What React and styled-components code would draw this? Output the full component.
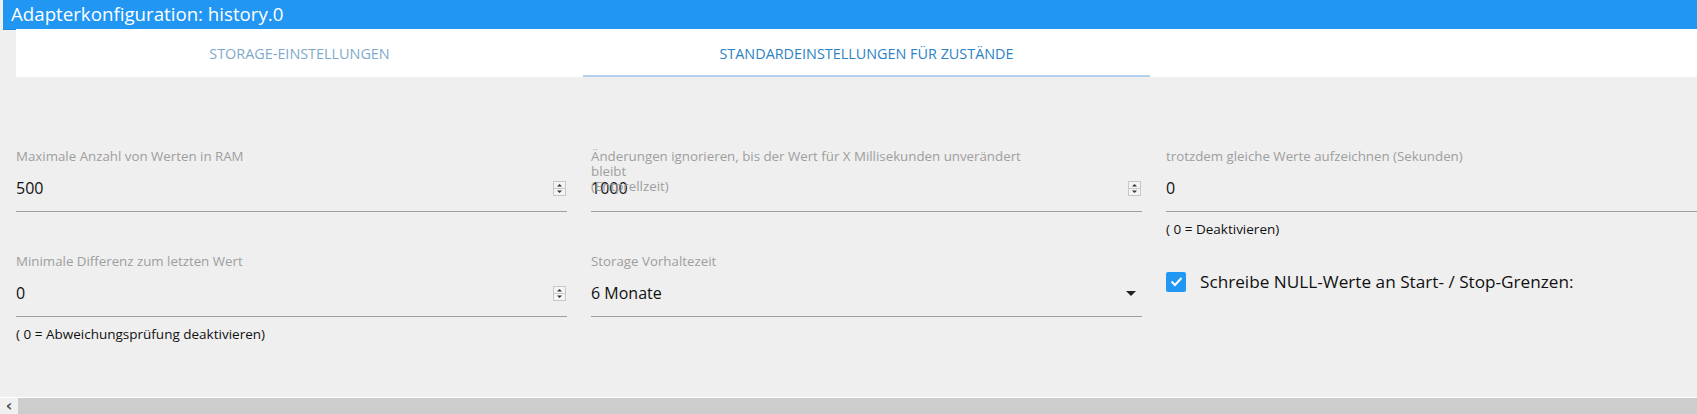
import React from 'react';
import styled, { createGlobalStyle } from 'styled-components';

const GlobalStyle = createGlobalStyle`
  html, body {
    margin: 0;
    padding: 0;
    background: #efefef;
    overflow: hidden;
  }
  body {
    font-family: 'Open Sans', 'Noto Sans', sans-serif;
  }
`;

const SpinnerIcon = () => (
  <svg width="13" height="15" viewBox="0 0 13 15">
    <rect x="0.5" y="0.5" width="12" height="14" fill="#f4f4f4" stroke="#c8c8c8" />
    <line x1="1" y1="7.5" x2="12" y2="7.5" stroke="#c8c8c8" />
    <path d="M4 5.5 L6.5 3 L9 5.5 Z" fill="#333" />
    <path d="M4 9.5 L6.5 12 L9 9.5 Z" fill="#333" />
  </svg>
);

const CaretIcon = () => (
  <svg width="10" height="5" viewBox="0 0 10 5">
    <path d="M0 0 L10 0 L5 5 Z" fill="#222" />
  </svg>
);

const CheckIcon = () => (
  <svg width="13" height="11" viewBox="0 0 13 11">
    <path d="M1.5 5.5 L5 9 L11.5 2" stroke="#fff" strokeWidth="2" fill="none" />
  </svg>
);

const App = () => {
  return (
    <>
      <GlobalStyle />
      <Page>
        <Content>
          <Header>Adapterkonfiguration: history.0</Header>
          <TabBar>
            <Tab>Storage-Einstellungen</Tab>
            <Tab active>Standardeinstellungen für Zustände</Tab>
          </TabBar>

          <FieldGrid>
            <Cell>
              <Field>
                <Label>Maximale Anzahl von Werten in RAM</Label>
                <InputRow>
                  <Value>500</Value>
                  <SpinnerIcon />
                </InputRow>
              </Field>
            </Cell>

            <Cell>
              <Field>
                <Label>
                  Änderungen ignorieren, bis der Wert für X Millisekunden unverändert
                  <br />
                  bleibt
                  <br />
                  (Entprellzeit)
                </Label>
                <InputRow>
                  <Value>1000</Value>
                  <SpinnerIcon />
                </InputRow>
              </Field>
            </Cell>

            <Cell>
              <Field>
                <Label>trotzdem gleiche Werte aufzeichnen (Sekunden)</Label>
                <InputRow>
                  <Value>0</Value>
                </InputRow>
              </Field>
              <Help>( 0 = Deaktivieren)</Help>
            </Cell>

            <Cell>
              <Field>
                <Label>Minimale Differenz zum letzten Wert</Label>
                <InputRow>
                  <Value>0</Value>
                  <SpinnerIcon />
                </InputRow>
              </Field>
              <Help>( 0 = Abweichungsprüfung deaktivieren)</Help>
            </Cell>

            <Cell>
              <Field>
                <Label>Storage Vorhaltezeit</Label>
                <InputRow select>
                  <Value>6 Monate</Value>
                  <CaretIcon />
                </InputRow>
              </Field>
            </Cell>

            <Cell>
              <CheckRow>
                <CheckBox>
                  <CheckIcon />
                </CheckBox>
                <CheckLabel>Schreibe NULL-Werte an Start- / Stop-Grenzen:</CheckLabel>
              </CheckRow>
            </Cell>
          </FieldGrid>
        </Content>

        <ScrollBar>
          <ScrollButton>‹</ScrollButton>
          <ScrollThumb />
        </ScrollBar>
      </Page>
    </>
  );
};

const Page = styled.div`
  display: flex;
  flex-direction: column;
  height: 100vh;
  width: 100vw;
  overflow: hidden;
`;

const Content = styled.div`
  flex: 1;
  overflow: hidden;
`;

const Header = styled.div`
  margin-left: 3px;
  height: 29px;
  padding-left: 8px;
  background: #2196f3;
  color: #fff;
  font-size: 18.7px;
  line-height: 27px;
  white-space: nowrap;
  box-shadow: 0 1px 0 #1e88d8;
`;

const TabBar = styled.div`
  display: flex;
  margin-left: 16px;
  height: 48px;
  background: #fff;
`;

const Tab = styled.div`
  flex: 0 0 567px;
  display: flex;
  align-items: center;
  justify-content: center;
  box-sizing: border-box;
  padding-top: 2px;
  font-size: 14.4px;
  text-transform: uppercase;
  white-space: nowrap;
  color: ${(p) => (p.active ? '#2d82c6' : '#7fa9cc')};
  border-bottom: 2px solid ${(p) => (p.active ? '#b3d1ec' : 'transparent')};
`;

const FieldGrid = styled.div`
  display: grid;
  grid-template-columns: 551px 551px 551px;
  grid-auto-rows: 105px;
  column-gap: 24px;
  padding: 72px 0 0 16px;
`;

const Cell = styled.div`
  display: flex;
  flex-direction: column;
  min-width: 0;
`;

const Field = styled.div`
  position: relative;
  padding-top: 16px;
`;

const Label = styled.label`
  position: absolute;
  top: 0;
  left: 0;
  font-size: 13.3px;
  line-height: 14.8px;
  color: #9e9e9e;
  white-space: nowrap;
`;

const InputRow = styled.div`
  display: flex;
  align-items: center;
  justify-content: space-between;
  height: 46px;
  padding-right: ${(p) => (p.select ? '6px' : '1px')};
  border-bottom: 1px solid #9e9e9e;
`;

const Value = styled.span`
  font-size: 16px;
  color: #111;
`;

const Help = styled.div`
  margin-top: 8px;
  font-size: 13.5px;
  color: #111;
  white-space: nowrap;
`;

const CheckRow = styled.div`
  display: flex;
  align-items: center;
  gap: 14px;
  padding-top: 16px;
`;

const CheckBox = styled.span`
  display: flex;
  align-items: center;
  justify-content: center;
  width: 20px;
  height: 20px;
  border-radius: 2px;
  background: #2196f3;
`;

const CheckLabel = styled.span`
  font-size: 17.2px;
  color: #111;
  white-space: nowrap;
`;

const ScrollBar = styled.div`
  display: flex;
  height: 16px;
  flex: 0 0 16px;
  border-top: 1px solid #fff;
  background: #f0f0f0;
`;

const ScrollButton = styled.div`
  flex: 0 0 18px;
  display: flex;
  align-items: center;
  justify-content: center;
  font-family: 'DejaVu Sans', sans-serif;
  font-size: 16px;
  font-weight: bold;
  line-height: 1;
  color: #505050;
`;

const ScrollThumb = styled.div`
  flex: 1;
  background: #cdcdcd;
`;

export default App;
